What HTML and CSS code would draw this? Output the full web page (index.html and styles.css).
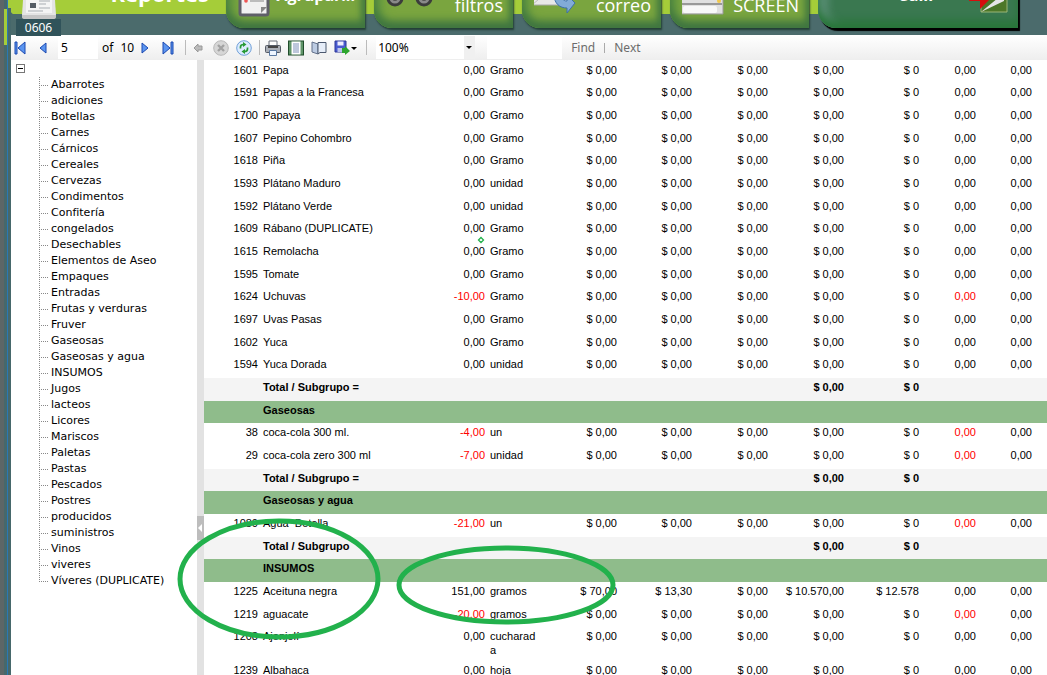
FILE: index.html
```
<!DOCTYPE html>
<html lang="es">
<head>
<meta charset="utf-8">
<title>Reportes</title>
<link rel="stylesheet" href="styles.css">
</head>
<body>
<div class="edge"></div>
<div class="app">
<header class="header">
  <div class="brand">
    <h1 class="title">Reportes</h1>
  </div>
  <nav class="actions">
    <button class="action high"><svg class="glyph" width="36" height="44" viewBox="0 0 36 44"><rect x="2" y="-8" width="28" height="39" rx="2" fill="#f1f1f1" stroke="#5f5f68" stroke-width="3"/><circle cx="8" cy="17" r="1.8" fill="#e55"/><path d="M12 17h14M12 8h14" stroke="#aaa" stroke-width="1.500"/><path d="M23 29l6-6h-6z" fill="#888"/></svg><span class="label">Agrupar...</span></button>
    <button class="action"><svg class="glyph" width="48" height="44" viewBox="0 0 48 44"><g fill="#8a8a8a" stroke="#3c3c3c" stroke-width="3"><circle cx="9" cy="14" r="7"/><circle cx="38" cy="14" r="7"/></g><g fill="#222"><circle cx="9" cy="13" r="3.500"/><circle cx="38" cy="13" r="3.500"/></g></svg><span class="label">filtros</span></button>
    <button class="action"><svg class="glyph" width="48" height="44" viewBox="0 0 48 44"><path d="M-2 -8h36v29H-2z" fill="#e8e8e8" stroke="#aaa"/><path d="M-2 21l14-12M34 21L20 9" stroke="#bbb"/><path d="M20 10c0 10 6 14 13 14v5l8-10-8-8v6c-4 0-6-3-6-8z" fill="#82abd8" stroke="#3d70a8"/></svg><span class="label">correo</span></button>
    <button class="action"><svg class="glyph" width="48" height="44" viewBox="0 0 48 44"><path d="M-4 15q0-4 4-10h36q5 6 5 10v15H-4z" fill="#e0e0e0" stroke="#9a9a9a"/><path d="M4 0h28v14H4z" fill="#fafafa" stroke="#bbb"/><path d="M-3 20h43" stroke="#999" stroke-width="2"/><rect x="1" y="22" width="34" height="7" rx="2" fill="#f8f8f8"/><circle cx="37" cy="17" r="2" fill="#f1c84c"/></svg><span class="label">SCREEN</span></button>
    <button class="action exit high"><span class="label">Salir</span><svg class="glyph" width="40" height="44" viewBox="0 0 40 44"><path d="M12 0h26v28H12z" fill="#4c7728" stroke="#9ab576"/><path d="M12 28l17-14V0h6v17z" fill="#e6e6e6"/><path d="M0 8v9h11v8l14-14V0H11v8z" fill="#d80d0d"/></svg></button>
  </nav>
</header>
<div class="badge"><svg width="36" height="19" viewBox="0 0 36 19"><path d="M2 0h32l1 15q0 3-3 3H4q-3 0-3-3z" fill="#e4e4e4"/><path d="M1 15h34v2q0 2-3 2H4q-3 0-3-2z" fill="#c6c6c6"/><path d="M5 0h26v13H5z" fill="#f4f4f4"/><path d="M9 3h6v5H9z" fill="#555c64"/><path d="M18 1h11M18 4h7M18 8h11M7 11h15" stroke="#a8adb2"/></svg><span class="badge-text">0606</span></div>

<div class="toolbar">
  <button class="tool" aria-label="Primera"><svg width="12" height="14" viewBox="0 0 12 14"><path d="M1 1h2v12H1zM11 1v12L4 7z" fill="#5b95f0" stroke="#1b48b0" stroke-width="1"/></svg></button>
  <button class="tool prev" aria-label="Anterior"><svg width="8" height="14" viewBox="0 0 8 14"><path d="M7 2v10L1 7z" fill="#5b95f0" stroke="#1b48b0"/></svg></button>
  <input class="page" value="5" aria-label="Página">
  <span class="of">of</span><span class="count">10</span>
  <button class="tool" aria-label="Siguiente"><svg width="8" height="14" viewBox="0 0 8 14"><path d="M1 2v10l6-5z" fill="#5b95f0" stroke="#1b48b0"/></svg></button>
  <button class="tool last" aria-label="Última"><svg width="12" height="14" viewBox="0 0 12 14"><path d="M9 1h2v12H9zM1 1v12l7-6z" fill="#5b95f0" stroke="#1b48b0"/></svg></button>
  <span class="sep"></span>
  <button class="tool back" aria-label="Atrás"><svg width="10" height="10" viewBox="0 0 10 10"><path d="M1 5l4-4v2h4v4H5v2z" fill="#bbb" stroke="#999"/></svg></button>
  <button class="tool stop" aria-label="Detener"><svg width="16" height="16" viewBox="0 0 16 16"><circle cx="8" cy="8" r="7.3" fill="#d6d6d6" stroke="#b8b8b8"/><path d="M5 5l6 6M11 5l-6 6" stroke="#a2a2a2" stroke-width="2.4"/></svg></button>
  <button class="tool refresh" aria-label="Actualizar"><svg width="16" height="16" viewBox="0 0 16 16"><circle cx="8" cy="8" r="7.3" fill="#dcecff" stroke="#6f9fd8"/><path d="M4.500 8.500V7q0-2.500 3-2.500M11.500 7.500V9q0 2.500-3 2.500" fill="none" stroke="#279a35" stroke-width="1.700"/><path d="M7 2l3.500 2.500L7 7zM9 9l-3.500 2.500L9 14z" fill="#279a35"/></svg></button>
  <span class="sep"></span>
  <button class="tool print" aria-label="Imprimir"><svg width="16" height="16" viewBox="0 0 16 16"><path d="M4 1h8v6H4z" fill="#fff" stroke="#6a707a"/><rect x=".5" y="5.500" width="15" height="7" rx="1" fill="#a9adb5" stroke="#555b66"/><path d="M3 7h10" stroke="#444" stroke-width="2"/><path d="M4.500 10.500h7v5h-7z" fill="#eef5ff" stroke="#5a78a0"/></svg></button>
  <button class="tool layout" aria-label="Diseño"><svg width="16" height="16" viewBox="0 0 16 16"><rect x=".5" y="1" width="15" height="14" fill="#5f9468" stroke="#204c2b"/><path d="M3.500 1.500h9v13h-9z" fill="#fff"/><path d="M5 4h6M5 6h6M5 8h6M5 10h6M5 12h6" stroke="#7c8fb8"/></svg></button>
  <button class="tool setup" aria-label="Configurar"><svg width="16" height="16" viewBox="0 0 16 16"><path d="M1 2l6 2v10l-6-2z" fill="#bccbe2" stroke="#63718b"/><path d="M7 4V2.500h8v10H9L7 14z" fill="#e6edf8" stroke="#4b586f"/></svg></button>
  <button class="tool save" aria-label="Exportar"><svg width="23" height="16" viewBox="0 0 23 16"><path d="M1 1h11v11H1z" fill="#4a5bd0" stroke="#2c3796"/><path d="M3.500 1.500h6v4h-6z" fill="#eef"/><path d="M3.500 8h5v4h-5z" fill="#bcc4ec"/><path d="M8 8h3V6l5 5-5 4v-2H8z" fill="#2ca52e"/><path d="M17 7h6l-3 3z"/></svg></button>
  <span class="sep zoomsep"></span>
  <span class="zoombox"><select class="zoom" aria-label="Zoom"><option>100%</option></select></span>
  <input class="search" aria-label="Buscar">
  <a class="link" href="#">Find</a><span class="bar"></span><a class="link" href="#">Next</a>
</div>

<div class="body">
<aside class="side">
  <button class="collapse" aria-label="Contraer"></button>
  <ul class="tree">
    <li>Abarrotes</li><li>adiciones</li><li>Botellas</li><li>Carnes</li><li>Cárnicos</li><li>Cereales</li><li>Cervezas</li><li>Condimentos</li><li>Confitería</li><li>congelados</li><li>Desechables</li><li>Elementos de Aseo</li><li>Empaques</li><li>Entradas</li><li>Frutas y verduras</li><li>Fruver</li><li>Gaseosas</li><li>Gaseosas y agua</li><li>INSUMOS</li><li>Jugos</li><li>lacteos</li><li>Licores</li><li>Mariscos</li><li>Paletas</li><li>Pastas</li><li>Pescados</li><li>Postres</li><li>producidos</li><li>suministros</li><li>Vinos</li><li>viveres</li><li>Víveres (DUPLICATE)</li>
  </ul>
</aside>
<div class="splitter"><svg width="7" height="24" viewBox="0 0 7 24"><path d="M0 0h7v24H0z" fill="#bdbdbd"/><path d="M5 8v8l-4-4z" fill="#fff"/></svg></div>
<main class="report">
<table>
<colgroup><col class="c-id"><col class="c-name"><col class="c-qty"><col class="c-unit"><col class="c-cost"><col class="c-75"><col class="c-76"><col class="c-76"><col class="c-75"><col class="c-57"><col class="c-56"><col></colgroup>
<tbody>
<tr><td>1601<td>Papa<td>0,00<td>Gramo<td>$ 0,00<td>$ 0,00<td>$ 0,00<td>$ 0,00<td>$ 0<td>0,00<td>0,00<td>
<tr><td>1591<td>Papas a la Francesa<td>0,00<td>Gramo<td>$ 0,00<td>$ 0,00<td>$ 0,00<td>$ 0,00<td>$ 0<td>0,00<td>0,00<td>
<tr><td>1700<td>Papaya<td>0,00<td>Gramo<td>$ 0,00<td>$ 0,00<td>$ 0,00<td>$ 0,00<td>$ 0<td>0,00<td>0,00<td>
<tr><td>1607<td>Pepino Cohombro<td>0,00<td>Gramo<td>$ 0,00<td>$ 0,00<td>$ 0,00<td>$ 0,00<td>$ 0<td>0,00<td>0,00<td>
<tr><td>1618<td>Piña<td>0,00<td>Gramo<td>$ 0,00<td>$ 0,00<td>$ 0,00<td>$ 0,00<td>$ 0<td>0,00<td>0,00<td>
<tr><td>1593<td>Plátano Maduro<td>0,00<td>unidad<td>$ 0,00<td>$ 0,00<td>$ 0,00<td>$ 0,00<td>$ 0<td>0,00<td>0,00<td>
<tr><td>1592<td>Plátano Verde<td>0,00<td>unidad<td>$ 0,00<td>$ 0,00<td>$ 0,00<td>$ 0,00<td>$ 0<td>0,00<td>0,00<td>
<tr><td>1609<td>Rábano (DUPLICATE)<td>0,00<td>Gramo<td>$ 0,00<td>$ 0,00<td>$ 0,00<td>$ 0,00<td>$ 0<td>0,00<td>0,00<td>
<tr><td>1615<td>Remolacha<td>0,00<td>Gramo<td>$ 0,00<td>$ 0,00<td>$ 0,00<td>$ 0,00<td>$ 0<td>0,00<td>0,00<td>
<tr><td>1595<td>Tomate<td>0,00<td>Gramo<td>$ 0,00<td>$ 0,00<td>$ 0,00<td>$ 0,00<td>$ 0<td>0,00<td>0,00<td>
<tr><td>1624<td>Uchuvas<td class="neg">-10,00<td>Gramo<td>$ 0,00<td>$ 0,00<td>$ 0,00<td>$ 0,00<td>$ 0<td class="neg">0,00<td>0,00<td>
<tr><td>1697<td>Uvas Pasas<td>0,00<td>Gramo<td>$ 0,00<td>$ 0,00<td>$ 0,00<td>$ 0,00<td>$ 0<td>0,00<td>0,00<td>
<tr><td>1602<td>Yuca<td>0,00<td>Gramo<td>$ 0,00<td>$ 0,00<td>$ 0,00<td>$ 0,00<td>$ 0<td>0,00<td>0,00<td>
<tr><td>1594<td>Yuca Dorada<td>0,00<td>unidad<td>$ 0,00<td>$ 0,00<td>$ 0,00<td>$ 0,00<td>$ 0<td>0,00<td>0,00<td>
<tr class="total"><td><td>Total / Subgrupo =<td><td><td><td><td><td>$ 0,00<td>$ 0<td><td><td>
<tr class="group"><td><td>Gaseosas<td><td><td><td><td><td><td><td><td><td>
<tr><td>38<td>coca-cola 300 ml.<td class="neg">-4,00<td>un<td>$ 0,00<td>$ 0,00<td>$ 0,00<td>$ 0,00<td>$ 0<td class="neg">0,00<td>0,00<td>
<tr><td>29<td>coca-cola zero 300 ml<td class="neg">-7,00<td>unidad<td>$ 0,00<td>$ 0,00<td>$ 0,00<td>$ 0,00<td>$ 0<td class="neg">0,00<td>0,00<td>
<tr class="total"><td><td>Total / Subgrupo =<td><td><td><td><td><td>$ 0,00<td>$ 0<td><td><td>
<tr class="group"><td><td>Gaseosas y agua<td><td><td><td><td><td><td><td><td><td>
<tr><td>1080<td>Agua&nbsp; Botella<td class="neg">-21,00<td>un<td>$ 0,00<td>$ 0,00<td>$ 0,00<td>$ 0,00<td>$ 0<td class="neg">0,00<td>0,00<td>
<tr class="total"><td><td>Total / Subgrupo<td><td><td><td><td><td>$ 0,00<td>$ 0<td><td><td>
<tr class="group"><td><td>INSUMOS<td><td><td><td><td><td><td><td><td><td>
<tr><td>1225<td>Aceituna negra<td>151,00<td>gramos<td>$ 70,00<td>$ 13,30<td>$ 0,00<td>$ 10.570,00<td>$ 12.578<td>0,00<td>0,00<td>
<tr><td>1219<td>aguacate<td class="neg">-20,00<td>gramos<td>$ 0,00<td>$ 0,00<td>$ 0,00<td>$ 0,00<td>$ 0<td class="neg">0,00<td>0,00<td>
<tr class="tall"><td>1208<td>Ajonjolí<td>0,00<td>cucharada<td>$ 0,00<td>$ 0,00<td>$ 0,00<td>$ 0,00<td>$ 0<td>0,00<td>0,00<td>
<tr><td>1239<td>Albahaca<td>0,00<td>hoja<td>$ 0,00<td>$ 0,00<td>$ 0,00<td>$ 0,00<td>$ 0<td>0,00<td>0,00<td>
</tbody>
</table>
</main>
</div>
</div>
<svg class="marks" width="640" height="660" viewBox="0 0 640 660" fill="none" stroke="#22b14c" stroke-width="5"><ellipse cx="279" cy="579" rx="99" ry="58"/><ellipse cx="506" cy="585" rx="107" ry="37"/><path d="M481 237.500l2.500 2.500-2.500 2.500-2.500-2.500z" stroke-width="1.300"/></svg>
</body>
</html>
```

FILE: styles.css
```
* { box-sizing: border-box; }
body {
  margin: 0;
  height: 100vh;
  display: flex;
  overflow: hidden;
  background: #fff;
  color: #000;
  font-family: "Liberation Sans", Arial, sans-serif;
}
button, input, select { font: inherit; border: 0; padding: 0; margin: 0; background: none; }
svg { display: block; flex: none; }

.edge {
  width: 11px;
  flex: none;
  background:
    linear-gradient(#2a78b4, #2a78b4) 7px 0 / 1px 100% no-repeat,
    linear-gradient(#a5cd39, #a5cd39) 4px 9px / 3px 36px no-repeat,
    linear-gradient(#a5cd39, #a5cd39) 8px 0 / 3px 8px no-repeat,
    linear-gradient(90deg, #5c6667 0 4px, #46686b 4px);
}
.app { flex: 1; min-width: 0; display: flex; flex-direction: column; }

.header {
  height: 35px;
  flex: none;
  display: flex;
  align-items: flex-end;
  overflow: hidden;
  background:
    linear-gradient(#4b6b6c, #4b6b6c) 100% 0 / 28px 35px no-repeat,
    radial-gradient(circle at 100% 0, transparent 11px, #4b6b6c 12px) 0 5px / 9px 9px no-repeat,
    linear-gradient(#a5cd39 0 14px, #4b6b6c 14px);
}
.brand { width: 215px; flex: none; height: 35px; display: flex; justify-content: flex-end; align-items: flex-end; }
.title { margin: 0 17px 30px 0; color: #fff; font: 700 22px/24px "Open Sans", sans-serif; }
.actions { flex: 1; display: flex; gap: 9px; padding-bottom: 7px; align-items: flex-end; }
.action {
  width: 139px;
  height: 64px;
  flex: none;
  display: flex;
  align-items: flex-end;
  justify-content: space-between;
  padding: 0 10px 11px 12px;
  border-radius: 0 0 0 18px;
  color: #fff;
  font: 18px/24px "Open Sans", sans-serif;
  background: #7aa53f;
  box-shadow: inset 0 -7px 8px #3f7540, inset 7px 0 8px #5c9440, inset -4px 0 6px #4f8540, 1px 2px 2px #223f36;
}
.action .glyph { margin-bottom: -11px; }
.high { font-size: 16px; font-weight: 700; }
.high .label { padding-bottom: 10px; }
.exit {
  width: 200px;
  padding: 0 9px 11px 82px;
  background: #3a7850;
  box-shadow: inset 0 -7px 8px #277538, inset 10px 0 9px #5c8f78, 2px 3px 1px #000;
}

.badge {
  position: absolute;
  left: 16px;
  top: 0;
  width: 45px;
  display: flex;
  flex-direction: column;
  align-items: center;
}
.badge-text {
  width: 100%;
  background: #30535a;
  color: #fff;
  text-align: center;
  font: 12px/17px "Noto Sans", sans-serif;
}

.toolbar {
  height: 25px;
  flex: none;
  display: flex;
  align-items: center;
  padding-left: 3px;
  background: linear-gradient(#fff, #eee);
  font: 12px/16px "Noto Sans", sans-serif;
}
.tool { display: block; flex: none; }
.prev { margin-left: 13px; }
.page { width: 40px; height: 23px; margin-left: 11px; padding-left: 3px; background: #fff; }
.of { margin-left: 4px; }
.count { margin: 0 7px; }
.last { margin-left: 13px; }
.sep { width: 1px; height: 15px; margin-left: 11px; background: #bbb; }
.back { margin-left: 7px; }
.stop { margin-left: 10px; }
.refresh { margin-left: 7px; }
.refresh + .sep { margin-left: 7px; }
.print { margin-left: 5px; }
.layout, .setup, .save { margin-left: 7px; }
.zoomsep { margin-left: 9px; }
.zoombox { position: relative; width: 99px; height: 23px; margin-left: 9px; background: linear-gradient(90deg, #fff 88px, #f0f0f0 88px); }
.zoombox::after {
  content: "";
  position: absolute;
  right: 3px;
  top: 10px;
  border: 3px solid transparent;
  border-top-color: #000;
  border-bottom: 0;
  pointer-events: none;
}
.zoom { width: 100%; height: 100%; padding-left: 2px; appearance: none; border-radius: 0; color: #000; }
.search { width: 75px; height: 23px; margin-left: 12px; background: #fff; }
.link { color: #6c6c6c; text-decoration: none; margin-left: 9px; }
.bar { width: 1px; height: 10px; margin-left: 9px; background: #aaa; }

.body { flex: 1; min-height: 0; display: flex; }
.side { width: 186px; flex: none; padding: 4px 0 0 5px; }
.collapse {
  display: block;
  width: 9px;
  height: 9px;
  border: 1px solid #777;
  background: linear-gradient(#000, #000) center / 5px 1px no-repeat;
}
.tree {
  list-style: none;
  margin: 4px 0 0 23px;
  padding: 0;
  font: 11px/16px "DejaVu Sans", Verdana, sans-serif;
  background: repeating-linear-gradient(#888 0 1px, transparent 1px 2px) 0 0 / 1px calc(100% - 8px) no-repeat;
}
.tree li {
  padding-left: 12px;
  white-space: nowrap;
  background: repeating-linear-gradient(90deg, #888 0 1px, transparent 1px 2px) 0 8px / 9px 1px no-repeat;
}
.splitter { width: 7px; flex: none; display: flex; align-items: center; background: #e2e2e2; padding-top: 320px; }
.report { flex: 1; min-width: 0; overflow: hidden; padding-top: 1px; }

table { width: 100%; table-layout: fixed; border-collapse: collapse; font-size: 11px; line-height: 14px; }
tr { height: 23px; }
tr:nth-child(3n+1) { height: 22px; }
.tall { height: 34px; }
td { padding: 2px 2px 2px 3px; vertical-align: top; text-align: right; }
td:nth-child(2), td:nth-child(4) { text-align: left; }
td:nth-child(2) { white-space: nowrap; }
td:nth-child(4) { overflow-wrap: anywhere; }
.neg { color: #f00; }
.total { background: #f4f4f4; font-weight: 700; }
.group { background: #8fbc8b; font-weight: 700; }
.c-id, .c-56 { width: 56px; }
.c-name { width: 160px; }
.c-qty { width: 67px; }
.c-unit { width: 53px; }
.c-cost { width: 79px; }
.c-75 { width: 75px; }
.c-76 { width: 76px; }
.c-57 { width: 57px; }

.marks { position: absolute; left: 0; top: 0; pointer-events: none; }
```
